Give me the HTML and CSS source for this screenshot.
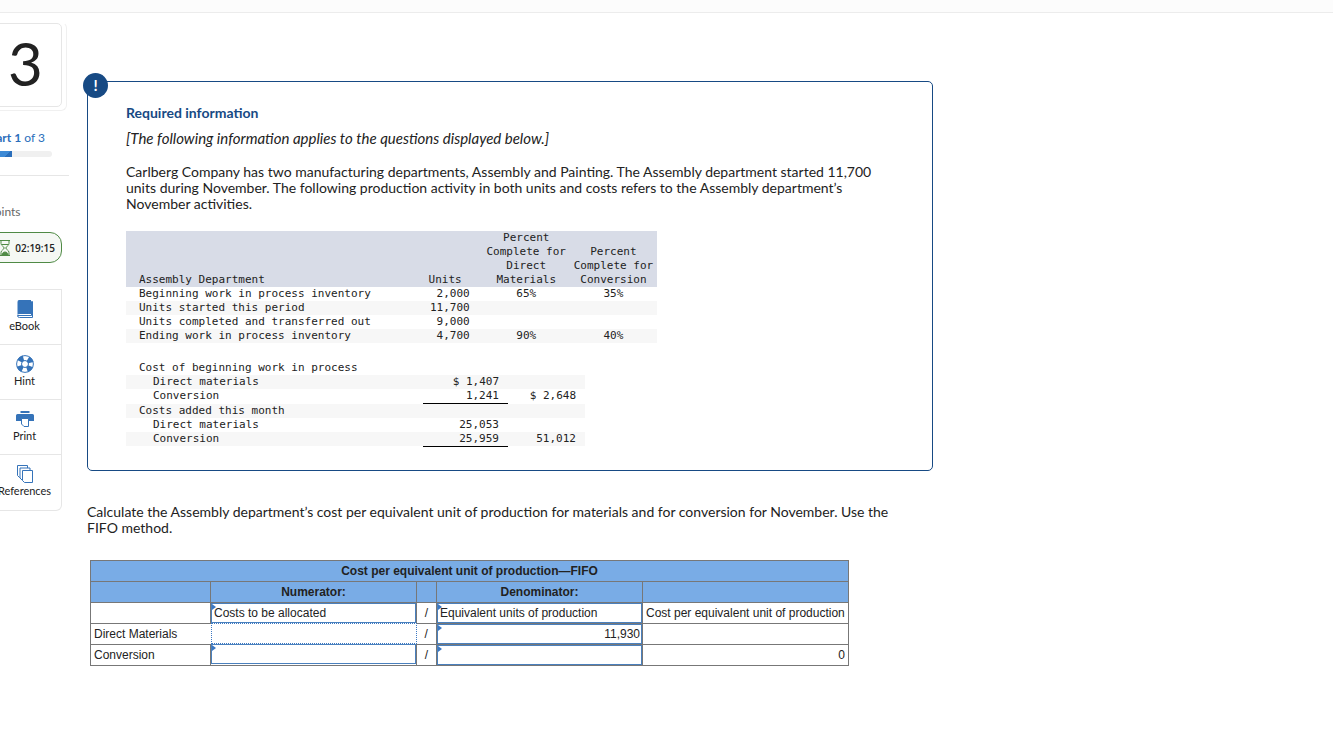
FILE: index.html
```html
<!DOCTYPE html>
<html lang="en">
<head>
<meta charset="utf-8">
<title>Question 3</title>
<meta name="viewport" content="width=device-width, initial-scale=1">
<link rel="stylesheet" href="styles.css">
</head>
<body>
<header class="topbar"></header>
<div class="page">
  <aside class="sidebar">
    <div class="number-stack"><div class="number">3</div></div>
    <div class="part"><b>Part 1</b> of 3</div>
    <div class="progress"><div class="progress-fill"></div></div>
    <hr class="divider">
    <div class="points">points</div>
    <div class="timer">
      <svg class="hourglass" viewBox="0 0 12 16" fill="none" stroke="#4f8a45"><path d="M1 .5h10M1 15.500h10M2 1v2.500c0 2.500 3.200 3 3.200 4.500S2 10 2 12.500V15M10 1v2.500C10 6 6.800 6.500 6.800 8s3.200 2 3.200 4.500V15M3 4.500h6"/><path d="M3 15c0-2 1.500-3 3-3s3 1 3 3z" fill="#4f8a45"/></svg>
      <span>02:19:15</span>
    </div>
    <nav class="tools">
      <button class="tool" type="button">
        <svg viewBox="0 0 18 18"><path d="M3 0h12v14H3.500C2 14 1.500 15 1.500 15V2Q1.500 0 3 0z" fill="#3573b9"/><path d="M15.500 1.500h1v16H3.500Q1.500 17.500 1.500 15.500H15.500z" fill="#fff" stroke="#3573b9"/></svg>
        <span>eBook</span>
      </button>
      <button class="tool" type="button">
        <svg viewBox="0 0 18 18" fill="none"><circle cx="9" cy="9" r="6" stroke="#3573b9" stroke-width="5.500" stroke-dasharray="4.700 4.725" stroke-dashoffset="-2.360"/><circle cx="9" cy="9" r="8.400" stroke="#3573b9"/><circle cx="9" cy="9" r="3.500" stroke="#3573b9"/></svg>
        <span>Hint</span>
      </button>
      <button class="tool" type="button">
        <svg viewBox="0 0 18 18"><path d="M4.500 1h9v2h-9zM1.500 4h15Q18 4 18 5.500V11H0V5.500Q0 4 1.500 4z" fill="#3573b9"/><path d="M5.500 8.500h7v8H8L5.500 14z" fill="#fff" stroke="#3573b9"/></svg>
        <span>Print</span>
      </button>
      <button class="tool" type="button">
        <svg viewBox="0 0 18 18" fill="#fff" stroke="#3573b9"><path d="M1.500.5h10v12H3.500l-2-2z"/><path d="M4 3h10v12H6l-2-2z"/><path d="M6.500 5.500h10v12h-8l-2-2z"/></svg>
        <span>References</span>
      </button>
    </nav>
  </aside>
  <main class="main">
    <section class="info">
      <span class="badge">!</span>
      <h1 class="info-title">Required information</h1>
      <p class="note">[The following information applies to the questions displayed below.]</p>
      <p class="text">Carlberg Company has two manufacturing departments, Assembly and Painting. The Assembly department started 11,700 units during November. The following production activity in both units and costs refers to the Assembly department’s November activities.</p>
      <table class="data units">
        <colgroup><col class="u-label"><col class="u-units"><col class="u-pct"><col class="u-pct"></colgroup>
        <thead>
          <tr><th class="label">Assembly Department</th><th>Units</th><th>Percent<br>Complete for<br>Direct<br>Materials</th><th>Percent<br>Complete for<br>Conversion</th></tr>
        </thead>
        <tbody>
          <tr><td class="label">Beginning work in process inventory</td><td class="num">2,000</td><td>65%</td><td>35%</td></tr>
          <tr class="alt"><td class="label">Units started this period</td><td class="num">11,700</td><td></td><td></td></tr>
          <tr><td class="label">Units completed and transferred out</td><td class="num">9,000</td><td></td><td></td></tr>
          <tr class="alt"><td class="label">Ending work in process inventory</td><td class="num">4,700</td><td>90%</td><td>40%</td></tr>
        </tbody>
      </table>
      <table class="data costs">
        <colgroup><col class="c-label"><col class="c-part"><col class="c-total"></colgroup>
        <tbody>
          <tr><td class="label">Cost of beginning work in process</td><td></td><td></td></tr>
          <tr class="alt"><td class="label sub">Direct materials</td><td class="num">$ 1,407</td><td></td></tr>
          <tr><td class="label sub">Conversion</td><td class="num sum">1,241</td><td class="num">$ 2,648</td></tr>
          <tr class="alt"><td class="label">Costs added this month</td><td></td><td></td></tr>
          <tr><td class="label sub">Direct materials</td><td class="num">25,053</td><td></td></tr>
          <tr class="alt"><td class="label sub">Conversion</td><td class="num sum">25,959</td><td class="num">51,012</td></tr>
        </tbody>
      </table>
    </section>
    <p class="text question">Calculate the Assembly department’s cost per equivalent unit of production for materials and for conversion for November. Use the FIFO method.</p>
    <table class="sheet">
      <colgroup><col class="s-label"><col class="s-wide"><col class="s-slash"><col class="s-wide"><col class="s-wide"></colgroup>
      <thead>
        <tr><th colspan="5">Cost per equivalent unit of production—FIFO</th></tr>
        <tr><th></th><th>Numerator:</th><th></th><th>Denominator:</th><th></th></tr>
      </thead>
      <tbody>
        <tr><td></td><td class="entry"><input type="text" aria-label="Numerator" value="Costs to be allocated"></td><td class="slash">/</td><td class="entry"><input type="text" aria-label="Denominator" value="Equivalent units of production"></td><td>Cost per equivalent unit of production</td></tr>
        <tr><td>Direct Materials</td><td class="entry active"><input type="text" aria-label="Direct Materials numerator"></td><td class="slash">/</td><td class="entry"><input class="right" type="text" aria-label="Direct Materials denominator" value="11,930"></td><td></td></tr>
        <tr><td>Conversion</td><td class="entry"><input type="text" aria-label="Conversion numerator"></td><td class="slash">/</td><td class="entry"><input class="right" type="text" aria-label="Conversion denominator"></td><td class="right">0</td></tr>
      </tbody>
    </table>
  </main>
</div>
</body>
</html>
```

FILE: styles.css
```css
* { box-sizing: border-box; }
body {
  margin: 0;
  background: #fff;
  color: #222;
  font-family: "Proxima Nova", Lato, sans-serif;
  font-size: 14px;
  line-height: 16px;
  overflow-x: hidden;
}
.topbar { height: 13px; background: #fcfcfc; border-bottom: 1px solid #ececec; }
.page { display: flex; align-items: flex-start; gap: 18px; }

.sidebar { flex: none; width: 81px; margin-left: -12px; padding-top: 9px; }
.number-stack {
  width: 79px;
  height: 89px;
  border: 1px solid #f0f0f0;
  border-top-color: transparent;
  border-radius: 6px;
}
.number {
  width: 73px;
  height: 84px;
  border: 1px solid #e6e6e6;
  border-radius: 5px;
  background: #fff;
  font-size: 60px;
  line-height: 78px;
  text-align: center;
}
.part { margin-top: 19px; font-size: 12px; color: #2a6ebb; padding-left: 1px; white-space: nowrap; }
.progress { width: 64px; height: 6px; margin-top: 5px; border-radius: 3px; background: #f0f0f0; overflow: hidden; }
.progress-fill { width: 24px; height: 6px; background: linear-gradient(135deg, #3d8ad6 0 75%, #2a6ebb 75%); }
.divider { margin: 18px 0 0; border: 0; border-top: 1px solid #e6e6e6; }
.points { margin-top: 28px; font-size: 12px; color: #666; }
.timer {
  display: flex;
  align-items: center;
  justify-content: flex-end;
  gap: 4px;
  width: 74px;
  height: 31px;
  margin-top: 12px;
  padding-right: 6px;
  border: 1px solid #4f8a45;
  border-radius: 12px;
  background: #f5f8f4;
  font-family: "Proxima Nova", "Open Sans", sans-serif;
  font-size: 10px;
  font-weight: 600;
}
.hourglass { flex: none; width: 12px; height: 16px; }
.tools {
  width: 74px;
  margin-top: 26px;
  border: 1px solid #e6e6e6;
  border-left: 0;
  border-radius: 0 0 6px 0;
}
.tool {
  display: flex;
  flex-direction: column;
  align-items: center;
  width: 100%;
  height: 55px;
  padding: 10px 0 0;
  border: 0;
  border-bottom: 1px solid #e6e6e6;
  background: none;
  color: #222;
  font-family: "Proxima Nova", Lato, sans-serif;
  font-size: 11px;
  line-height: 16px;
}
.tool:last-child { border-bottom: 0; }
.tool svg { width: 18px; height: 18px; }

.main { flex: 0 1 846px; padding-top: 68px; }
.info {
  position: relative;
  padding: 23px 38px 23px;
  border: 1px solid #174a84;
  border-radius: 5px;
}
.badge {
  position: absolute;
  top: -9px;
  left: -5px;
  width: 25px;
  height: 25px;
  border-radius: 50%;
  background: #174a84;
  color: #fff;
  font-size: 15px;
  font-weight: 700;
  line-height: 24px;
  text-align: center;
}
.info-title { margin: 0; font-size: 14px; line-height: 16px; color: #174a84; }
.note { margin: 9px 0 0; font-size: 15px; font-style: italic; }
.text { margin: 18px 0 0; }
.question { margin: 33px 0 0; padding-right: 24px; }

.data {
  border-collapse: collapse;
  table-layout: fixed;
  font-family: Consolas, "DejaVu Sans Mono", monospace;
  font-size: 11px;
  line-height: 14px;
}
.data th, .data td { height: 14px; padding: 0; font-weight: 400; text-align: center; white-space: nowrap; }
.data th { vertical-align: bottom; background: #d8dce7; }
.data .alt td { background: #f7f7f7; }
.data .label { padding-left: 13px; text-align: left; }
.data .sub { padding-left: 27px; }
.data .num { text-align: right; }
.data .sum { border-bottom: 1px solid #000; }
.units { width: 531px; margin-top: 19px; }
.units .num { padding-right: 13px; }
.u-label { width: 281px; }
.u-units { width: 75px; }
.u-pct { width: 87px; }
.costs { width: 459px; margin-top: 18px; }
.costs .num { padding-right: 9px; }
.c-label { width: 297px; }
.c-part { width: 85px; }
.c-total { width: 77px; }

.sheet {
  width: 759px;
  margin: 24px 0 0 3px;
  border-collapse: collapse;
  table-layout: fixed;
  font-family: Arial, "Liberation Sans", sans-serif;
  font-size: 12px;
}
.s-label { width: 120px; }
.s-wide { width: 206px; }
.s-slash { width: 20px; }
.sheet th, .sheet td { height: 21px; padding: 0 3px; border: 1px solid #777; }
.sheet th { background: #79ace6; font-weight: 700; }
.sheet .slash { padding: 0; text-align: center; }
.sheet .entry { position: relative; padding: 0; }
.sheet .entry::before {
  content: "";
  position: absolute;
  top: 1px;
  left: 1px;
  border: 3px solid transparent;
  border-left: 4px solid #3b78c3;
  border-right: 0;
}
.sheet input {
  display: block;
  width: 100%;
  height: 20px;
  padding: 0 2px;
  border: 1px solid #4a80bd;
  border-radius: 0;
  background: #fff;
  color: #222;
  font: inherit;
}
.sheet .right { text-align: right; }
.sheet input.right { padding-right: 1px; }
.sheet td.active { border-style: hidden; }
.sheet .active::before { display: none; }
.sheet .active input { height: 21px; border: 1px dotted #3b78c3; }
```
